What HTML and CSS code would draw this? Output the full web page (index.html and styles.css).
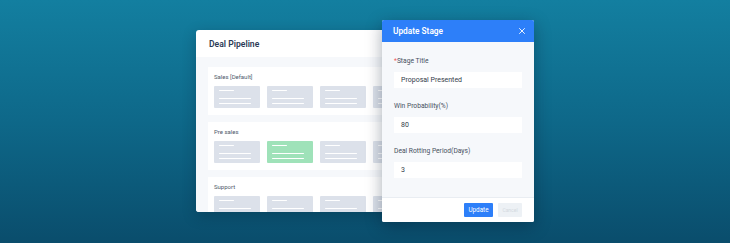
FILE: index.html
```html
<!DOCTYPE html>
<html lang="en">
<head>
    <meta charset="UTF-8">
    <meta name="viewport" content="width=device-width, initial-scale=1.0">
    <title>Update Stage</title>
    <link rel="stylesheet" href="styles.css">
</head>
<body>
    <div class="scene">
        <div class="pipeline-card">
            <div class="card-header">Deal Pipeline</div>
            <div class="card-body">
                <div class="lane">
                    <div class="lane-title">Sales [Default]</div>
                    <div class="tiles">
                        <div class="tile"><i class="short"></i><i></i><i></i></div>
                        <div class="tile"><i class="short"></i><i></i><i></i></div>
                        <div class="tile"><i class="short"></i><i></i><i></i></div>
                        <div class="tile"><i class="short"></i><i></i><i></i></div>
                    </div>
                </div>
                <div class="lane">
                    <div class="lane-title">Pre sales</div>
                    <div class="tiles">
                        <div class="tile"><i class="short"></i><i></i><i></i></div>
                        <div class="tile active"><i class="short"></i><i></i><i></i></div>
                        <div class="tile"><i class="short"></i><i></i><i></i></div>
                        <div class="tile"><i class="short"></i><i></i><i></i></div>
                    </div>
                </div>
                <div class="lane">
                    <div class="lane-title">Support</div>
                    <div class="tiles">
                        <div class="tile"><i class="short"></i><i></i><i></i></div>
                        <div class="tile"><i class="short"></i><i></i><i></i></div>
                        <div class="tile"><i class="short"></i><i></i><i></i></div>
                        <div class="tile"><i class="short"></i><i></i><i></i></div>
                    </div>
                </div>
            </div>
        </div>

        <div class="modal">
            <div class="modal-header">
                <span>Update Stage</span>
                <svg class="close" width="8" height="8" viewBox="0 0 8 8">
                    <path d="M1.5 1.5L6.5 6.5M6.5 1.5L1.5 6.5" stroke="#fff" stroke-width="0.9" stroke-linecap="round"/>
                </svg>
            </div>
            <div class="modal-body">
                <div class="field">
                    <label><span class="req">*</span>Stage Title</label>
                    <div class="input">Proposal Presented</div>
                </div>
                <div class="field">
                    <label>Win Probability(%)</label>
                    <div class="input">80</div>
                </div>
                <div class="field">
                    <label>Deal Rotting Period(Days)</label>
                    <div class="input">3</div>
                </div>
            </div>
            <div class="modal-footer">
                <button class="btn primary">Update</button>
                <button class="btn muted">Cancel</button>
            </div>
        </div>
    </div>
</body>
</html>
```

FILE: styles.css
```css
* { box-sizing: border-box; }
body {
    margin: 0;
    width: 730px;
    height: 243px;
    overflow: hidden;
    font-family: Roboto, "Noto Sans", sans-serif;
    background: linear-gradient(180deg, #137fa0 0%, #0e6889 50%, #0a4d6c 100%);
}
.scene {
    position: relative;
    height: 243px;
    padding: 30px 0 0 196px;
}
.pipeline-card {
    width: 210px;
    height: 182px;
    background: #fff;
    border-radius: 3px;
    overflow: hidden;
    box-shadow: 0 4px 14px rgba(0, 30, 50, 0.3);
}
.card-header {
    height: 27px;
    padding: 0 13px;
    display: flex;
    align-items: center;
    font-size: 8.6px;
    font-weight: 600;
    color: #2b3a55;
}
.card-body {
    background: #f6f8fb;
    height: 155px;
    padding: 10px 0 0 12px;
}
.lane {
    background: #fff;
    width: 240px;
    padding: 6px 6px 7px;
    margin-bottom: 7px;
}
.lane-title {
    height: 8px;
    line-height: 8px;
    font-size: 6px;
    color: #4f5a6b;
    margin-bottom: 5px;
}
.tiles {
    display: flex;
    gap: 7px;
}
.tile {
    flex: none;
    width: 46px;
    height: 22px;
    background: #dce1ea;
    border-radius: 1px;
    padding: 4px 5px;
    display: flex;
    flex-direction: column;
    gap: 4px;
}
.tile i {
    display: block;
    width: 32px;
    height: 2px;
    background: #fff;
    border-radius: 1px;
}
.tile i.short {
    width: 15px;
    margin-bottom: 3px;
}
.tile.active { background: #9fe2b9; }

.modal {
    position: absolute;
    left: 382px;
    top: 20px;
    width: 152px;
    height: 202px;
    display: flex;
    flex-direction: column;
    background: #f6f8fb;
    border-radius: 2px;
    overflow: hidden;
    box-shadow: 0 4px 16px rgba(0, 20, 40, 0.35);
}
.modal-header {
    height: 22px;
    background: #2d7ff9;
    color: #fff;
    padding: 0 8px 0 11px;
    display: flex;
    align-items: center;
    justify-content: space-between;
    font-size: 8.3px;
    font-weight: 600;
}
.modal-body {
    flex: 1;
    padding: 14px 12px 0;
}
.field { margin-bottom: 13px; }
.field label {
    display: block;
    height: 10px;
    line-height: 10px;
    font-size: 6.7px;
    color: #465061;
    margin-bottom: 6px;
}
.req { color: #f15b5b; }
.input {
    height: 16px;
    background: #fff;
    padding: 0 7px;
    line-height: 16px;
    font-size: 7px;
    color: #333c4a;
}
.modal-footer {
    height: 25px;
    background: #fff;
    border-top: 1px solid #e9edf2;
    display: flex;
    align-items: center;
    justify-content: flex-end;
    gap: 5px;
    padding: 0 12px;
}
.btn {
    height: 14px;
    border: none;
    border-radius: 1px;
    padding: 0;
    font-family: inherit;
    font-size: 6.3px;
}
.btn.primary {
    width: 29px;
    background: #2d7ff9;
    color: #fff;
}
.btn.muted {
    width: 24px;
    background: #edf1f5;
    color: #d3d9e0;
    font-size: 5px;
}
```
